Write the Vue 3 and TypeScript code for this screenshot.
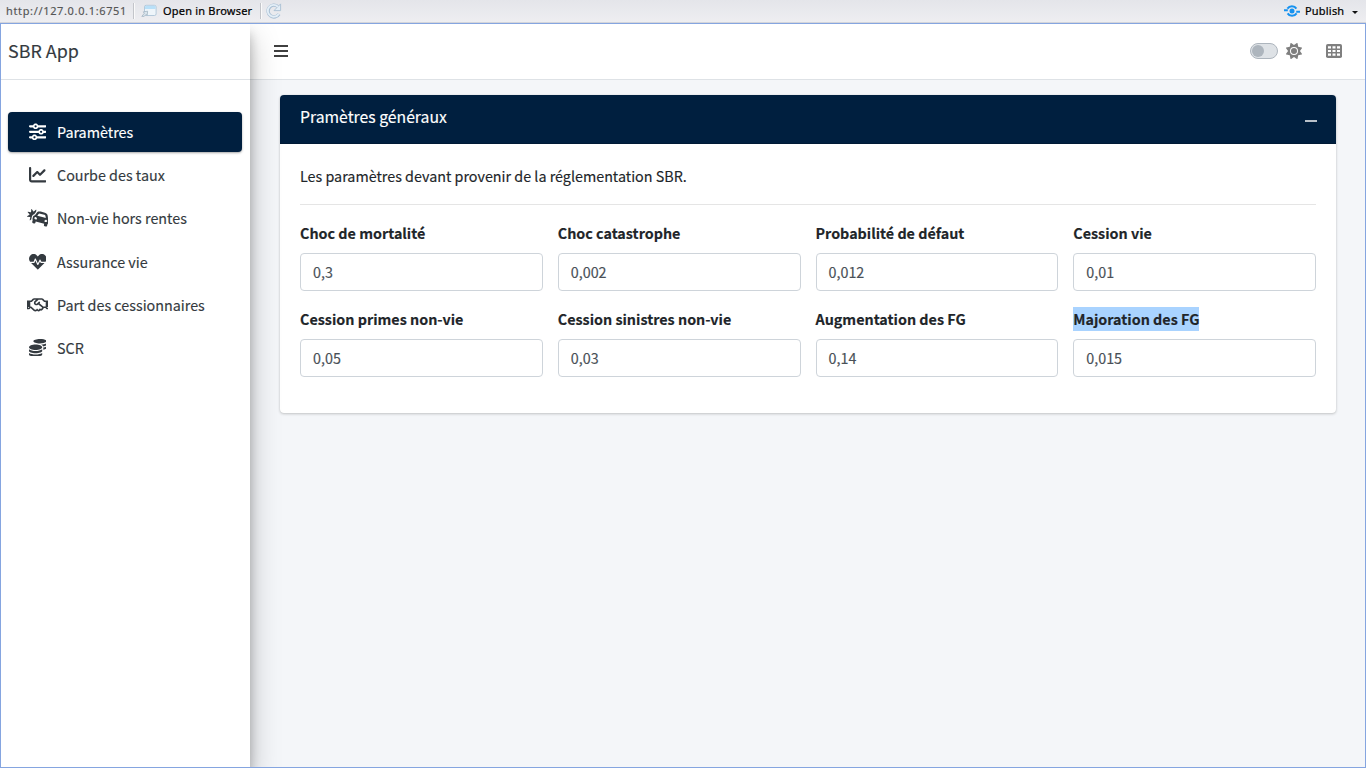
<script setup lang="ts">
interface NavItem {
  label: string
  box: string
  path: string
}

const nav: NavItem[] = [
  {
    label: 'Paramètres',
    box: '0 0 512 512',
    path: 'M0 416c0 17.7 14.3 32 32 32l54.7 0c12.3 28.3 40.5 48 73.3 48s61-19.7 73.3-48L480 448c17.7 0 32-14.3 32-32s-14.3-32-32-32l-246.7 0c-12.3-28.3-40.5-48-73.3-48s-61 19.7-73.3 48L32 384c-17.7 0-32 14.3-32 32zm128 0a32 32 0 1 1 64 0 32 32 0 1 1 -64 0zM320 256a32 32 0 1 1 64 0 32 32 0 1 1 -64 0zm32-80c-32.8 0-61 19.7-73.3 48L32 224c-17.7 0-32 14.3-32 32s14.3 32 32 32l246.7 0c12.3 28.3 40.5 48 73.3 48s61-19.7 73.3-48l54.7 0c17.7 0 32-14.3 32-32s-14.3-32-32-32l-54.7 0c-12.3-28.3-40.5-48-73.3-48zM192 128a32 32 0 1 1 0-64 32 32 0 1 1 0 64zm73.3-64C253 35.7 224.8 16 192 16s-61 19.7-73.3 48L32 64C14.3 64 0 78.3 0 96s14.3 32 32 32l86.7 0c12.3 28.3 40.5 48 73.3 48s61-19.7 73.3-48L480 128c17.7 0 32-14.3 32-32s-14.3-32-32-32L265.3 64z',
  },
  {
    label: 'Courbe des taux',
    box: '0 0 512 512',
    path: 'M64 64c0-17.7-14.3-32-32-32S0 46.3 0 64V400c0 44.2 35.8 80 80 80H480c17.7 0 32-14.3 32-32s-14.3-32-32-32H80c-8.8 0-16-7.2-16-16V64zm406.6 86.6c12.5-12.5 12.5-32.8 0-45.3s-32.8-12.5-45.3 0L320 210.7l-57.4-57.4c-12.5-12.5-32.8-12.5-45.3 0l-112 112c-12.5 12.5-12.5 32.8 0 45.3s32.8 12.5 45.3 0L240 221.3l57.4 57.4c12.5 12.5 32.8 12.5 45.3 0l128-128z',
  },
  {
    label: 'Non-vie hors rentes',
    box: '0 0 640 512',
    path: 'M143.25 220.81l-12.42 46.37c-3.01 11.25-3.63 22.89-2.41 34.39l-35.2 28.98c-6.57 5.41-16.31-.43-14.62-8.77l15.44-76.68c1.06-5.26-2.66-10.28-8-10.79l-77.86-7.55c-8.47-.82-11.23-11.83-4.14-16.54l65.15-43.3c4.46-2.97 5.38-9.15 1.98-13.29L21.46 93.22c-5.41-6.57.43-16.3 8.78-14.62l76.68 15.44c5.26 1.06 10.28-2.66 10.8-8l7.55-77.86c.82-8.48 11.83-11.23 16.55-4.14l43.3 65.14c2.97 4.46 9.15 5.38 13.29 1.98l60.4-49.71c6.57-5.41 16.3.43 14.62 8.77L262.1 86.38c-2.71 3.05-5.43 6.09-7.91 9.4l-32.15 42.97-10.71 14.32c-32.73 8.76-59.18 34.53-68.08 67.74zm494.57 132.51l-12.42 46.36c-3.13 11.68-9.38 21.61-17.55 29.36a66.876 66.876 0 0 1-8.76 7l-13.99 52.23c-1.14 4.27-3.1 8.1-5.65 11.38-7.67 9.84-20.74 14.68-33.54 11.25L515 502.62c-17.07-4.57-27.2-22.12-22.63-39.19l8.28-30.91-247.28-66.26-8.28 30.91c-4.57 17.07-22.12 27.2-39.19 22.63l-30.91-8.28c-12.8-3.43-21.7-14.16-23.42-26.51-.57-4.12-.35-8.42.79-12.68l13.99-52.23a66.62 66.62 0 0 1-4.09-10.45c-3.2-10.79-3.65-22.52-.52-34.2l12.42-46.37c5.31-19.8 19.36-34.83 36.89-42.21a64.336 64.336 0 0 1 18.49-4.72l18.13-24.23 32.15-42.97c3.45-4.61 7.19-8.9 11.2-12.84 8-7.89 17.03-14.44 26.74-19.51 4.86-2.54 9.89-4.71 15.05-6.49 10.33-3.58 21.19-5.63 32.24-6.04 11.05-.41 22.31.82 33.43 3.8l122.68 32.87c11.12 2.98 21.48 7.54 30.85 13.43a111.11 111.11 0 0 1 34.69 34.5c8.82 13.88 14.64 29.84 16.68 46.99l6.36 53.29 3.59 30.05a64.49 64.49 0 0 1 22.74 29.93c4.39 11.88 5.29 25.19 1.75 38.39zM255.58 234.34c-18.55-4.97-34.21 4.04-39.17 22.53-4.96 18.49 4.11 34.12 22.65 39.09 18.55 4.97 45.54 15.51 50.49-2.98 4.96-18.49-15.43-53.67-33.97-58.64zm290.61 28.17l-6.36-53.29c-.58-4.87-1.89-9.53-3.82-13.86-5.8-12.99-17.2-23.01-31.42-26.82l-122.68-32.87a48.008 48.008 0 0 0-50.86 17.61l-32.15 42.97 172 46.08 75.29 20.18zm18.49 54.65c-18.55-4.97-53.8 15.31-58.75 33.79-4.95 18.49 23.69 22.86 42.24 27.83 18.55 4.97 34.21-4.04 39.17-22.53 4.95-18.48-4.11-34.12-22.66-39.09z',
  },
  {
    label: 'Assurance vie',
    box: '0 0 512 512',
    path: 'M320.2 243.8l-49.7 99.4c-6 12.1-23.4 11.7-28.9-.6l-56.9-126.3-30 71.7H60.6l182.5 186.5c7.1 7.3 18.6 7.3 25.7 0L451.4 288H342.3l-22.1-44.2zM473.7 73.9l-2.4-2.5c-51.5-52.6-135.8-52.6-187.4 0L256 100l-27.9-28.5c-51.5-52.7-135.9-52.7-187.4 0l-2.4 2.4C-10.4 123.7-12.5 203 31 256h102.4l35.9-86.2c5.4-12.9 23.6-13.1 29.3-.4l58.3 129.3 49-97.9c5.9-11.8 22.7-11.8 28.6 0l27.6 55.2H481c43.5-53 41.4-132.3-7.3-182.1z',
  },
  {
    label: 'Part des cessionnaires',
    box: '0 0 640 512',
    path: 'M519.2 127.9l-47.6-47.6A56.252 56.252 0 0 0 432 64H205.2c-14.8 0-29.1 5.9-39.6 16.3L118 127.9H0v255.7h64c17.6 0 31.8-14.2 31.9-31.7h9.1l84.6 76.4c30.9 25.1 73.8 25.7 105.6 3.8 12.5 10.8 26 15.9 41.1 15.9 18.2 0 35.3-7.4 48.8-24 22.1 8.7 48.2 2.6 64-16.8l26.2-32.3c5.6-6.9 9.1-14.8 10.9-23h57.9c.1 17.5 14.4 31.7 31.9 31.7h64V127.9H519.2zM48 351.6c-8.8 0-16-7.2-16-16s7.2-16 16-16 16 7.2 16 16c0 8.9-7.2 16-16 16zm390-6.9l-26.1 32.2c-2.8 3.4-7.8 4-11.3 1.2l-23.9-19.4-30 36.5c-6 7.3-15 4.8-18 2.4l-36.8-31.5-15.6 19.2c-13.9 17.1-39.2 19.7-55.3 6.6l-97.3-88H96V175.8h41.9l61.7-61.6c2-.8 3.7-1.5 5.7-2.3H262l-38.7 35.5c-29.4 26.9-31.1 72.3-4.4 101.3 14.8 16.2 61.2 41.2 101.5 4.4l8.2-7.5 108.2 87.8c3.4 2.8 3.9 7.9 1.2 11.3zm106-40.8h-69.2c-2.3-2.8-4.9-5.4-7.7-7.7l-102.7-83.4 12.5-11.4c6.5-6 7-16.1 1-22.6L367 167.1c-6-6.5-16.1-6.9-22.6-1l-55.2 50.6c-9.5 8.7-25.7 9.4-34.6 0-9.3-9.9-8.5-25.1 1.2-33.9l65.6-60.1c7.4-6.8 17-10.5 27-10.5l83.7-.2c2.1 0 4.1.8 5.5 2.3l61.7 61.6H544v128zm48 47.7c-8.8 0-16-7.2-16-16s7.2-16 16-16 16 7.2 16 16c0 8.9-7.2 16-16 16z',
  },
  {
    label: 'SCR',
    box: '0 0 512 512',
    path: 'M0 405.3V448c0 35.3 86 64 192 64s192-28.7 192-64v-42.7C342.7 434.4 267.2 448 192 448S41.3 434.4 0 405.3zM320 128c106 0 192-28.7 192-64S426 0 320 0 128 28.7 128 64s86 64 192 64zM0 300.4V352c0 35.3 86 64 192 64s192-28.7 192-64v-51.6c-41.3 34-116.9 51.6-192 51.6S41.3 334.4 0 300.4zm416 11c57.3-11.1 96-31.7 96-55.4v-42.7c-23.2 16.4-57.3 27.6-96 34.5v63.6zM192 160C86 160 0 195.8 0 240s86 80 192 80 192-35.8 192-80-86-80-192-80zm219.3 56.3c60-10.8 100.7-32 100.7-56.3v-42.7c-35.5 25.1-96.5 38.6-160.7 41.8 29.5 14.3 51.2 33.5 60 57.2z',
  },
]

const fields: { label: string; value: string; selected?: boolean }[] = [
  { label: 'Choc de mortalité', value: '0,3' },
  { label: 'Choc catastrophe', value: '0,002' },
  { label: 'Probabilité de défaut', value: '0,012' },
  { label: 'Cession vie', value: '0,01' },
  { label: 'Cession primes non-vie', value: '0,05' },
  { label: 'Cession sinistres non-vie', value: '0,03' },
  { label: 'Augmentation des FG', value: '0,14' },
  { label: 'Majoration des FG', value: '0,015', selected: true },
]
</script>

<template>
  <div class="window">
    <div class="toolbar">
      <span class="url">http://127.0.0.1:6751</span>
      <i class="sep"></i>
      <svg class="open-icon" width="16" height="14" viewBox="0 0 16 14">
        <rect x="3.5" y="1.3" width="11.6" height="10.2" rx="1.6" fill="#eef5fa" stroke="#b4c9da" />
        <path d="M4 3Q4 1.8 5.3 1.8h8Q14.6 1.8 14.6 3V5H4z" fill="#b9e0f8" />
        <path d="M.8 12.4L3.4 9.2 2.2 7.9 6.6 7.2 6.2 11.4 5 10.4 3.2 12.4z" fill="#dbe6ee" stroke="#a3b5c3" stroke-width=".8" />
      </svg>
      <span class="open">Open in Browser</span>
      <i class="sep"></i>
      <svg class="reload" width="16" height="16" viewBox="0 0 16 16" fill="none">
        <path d="M13 11.2A5.9 5.9 0 1 1 11.8 3.5" stroke="#a9bfd3" stroke-width="3.4" />
        <path d="M14.6 .9V7.6H8z" fill="#e3eef7" stroke="#a9bfd3" stroke-width=".9" />
        <path d="M12.7 10.9A5.9 5.9 0 1 1 12 3.8" stroke="#e3eef7" stroke-width="1.9" />
      </svg>
      <div class="publish">
        <svg width="16" height="12" viewBox="0 0 16 12" fill="none" stroke="#1692f0">
          <circle cx="8" cy="6" r="2.5" fill="#1692f0" stroke="none" />
          <path d="M3.4 3.6C5.6.4 10.4.4 12.4 3.6M12.6 8.4C10.4 11.6 5.6 11.6 3.6 8.4" stroke-width="2" />
          <path d="M0 5.3h3.8M12.2 6.7H16" stroke-width="1.9" />
        </svg>
        <span>Publish</span>
        <i class="caret"></i>
      </div>
    </div>

    <div class="frame">
      <aside class="sidebar">
        <div class="brand">SBR App</div>
        <nav>
          <a v-for="(item, i) in nav" :key="item.label" :class="['nav-link', { active: i === 0 }]">
            <span class="nav-icon">
              <svg :viewBox="item.box" fill="currentColor"><path :d="item.path" /></svg>
            </span>
            <span>{{ item.label }}</span>
          </a>
        </nav>
      </aside>

      <div class="main">
        <header class="navbar">
          <svg class="bars" width="14" height="12" viewBox="0 0 14 12">
            <path d="M0 0h14v2H0zM0 5h14v2H0zM0 10h14v2H0z" fill="#404040" />
          </svg>
          <div class="tools">
            <span class="switch"><i></i></span>
            <svg class="sun" width="16" height="16" viewBox="0 0 512 512" fill="#7f7f7f">
              <path d="M361.5 1.2c5 2.1 8.6 6.6 9.6 11.9L391 121l107.9 19.8c5.3 1 9.8 4.6 11.9 9.6s1.5 10.7-1.6 15.2L446.9 256l62.3 90.3c3.1 4.5 3.7 10.2 1.6 15.2s-6.6 8.6-11.9 9.6L391 391 371.1 498.9c-1 5.3-4.6 9.8-9.6 11.9s-10.7 1.5-15.2-1.6L256 446.9l-90.3 62.3c-4.5 3.1-10.2 3.7-15.2 1.6s-8.6-6.6-9.6-11.9L121 391 13.1 371.1c-5.3-1-9.8-4.6-11.9-9.6s-1.5-10.7 1.6-15.2L65.1 256 2.8 165.7c-3.1-4.5-3.7-10.2-1.6-15.2s6.6-8.6 11.9-9.6L121 121 140.9 13.1c1-5.3 4.6-9.8 9.6-11.9s10.7-1.5 15.2 1.6L256 65.1 346.3 2.8c4.5-3.1 10.2-3.7 15.2-1.6zM160 256a96 96 0 1 1 192 0 96 96 0 1 1 -192 0zm224 0a128 128 0 1 0 -256 0 128 128 0 1 0 256 0z" />
            </svg>
            <svg class="cells" width="16" height="14" viewBox="0 0 16 14">
              <rect width="16" height="14" rx="1.8" fill="#7f7f7f" />
              <path d="M2 2.2h3v2.2H2zM6.5 2.2h3v2.2h-3zM11 2.2h3v2.2h-3zM2 5.9h3v2.2H2zM6.5 5.9h3v2.2h-3zM11 5.9h3v2.2h-3zM2 9.6h3v2.2H2zM6.5 9.6h3v2.2h-3zM11 9.6h3v2.2h-3z" fill="#fff" />
            </svg>
          </div>
        </header>

        <section class="card">
          <div class="card-header">
            <h3>Pramètres généraux</h3>
            <i class="minus"></i>
          </div>
          <div class="card-body">
            <p>Les paramètres devant provenir de la réglementation SBR.</p>
            <hr />
            <div class="grid">
              <div v-for="f in fields" :key="f.label" class="field">
                <label><span :class="{ selected: f.selected }">{{ f.label }}</span></label>
                <div class="input">{{ f.value }}</div>
              </div>
            </div>
          </div>
        </section>
      </div>
    </div>
  </div>
</template>

<style>
body {
  margin: 0;
  overflow: hidden;
}
</style>

<style scoped>
* {
  box-sizing: border-box;
}
.window {
  width: 1366px;
  height: 768px;
  display: flex;
  flex-direction: column;
  font-family: 'Noto Sans CJK SC', 'Noto Sans', sans-serif;
  font-size: 14.33px;
  color: #212529;
  white-space: nowrap;
  -webkit-text-stroke: 0.15px currentColor;
}
svg {
  display: block;
  flex: none;
}
.toolbar {
  height: 23px;
  flex: none;
  display: flex;
  align-items: center;
  padding: 0 6px;
  background: linear-gradient(#e4e5ea, #eeeef1);
  border-bottom: 1px solid #d4d5da;
  font: 11px/22px 'Noto Sans', sans-serif;
  color: #000;
}
.url {
  width: 127px;
  color: #555;
  letter-spacing: 0.65px;
}
.sep {
  width: 2px;
  height: 16px;
  background: #c3c5ca;
  border-right: 1px solid #fafafa;
}
.open-icon {
  margin: 0 5px 0 6px;
}
.open {
  width: 98px;
  padding-left: 1px;
  letter-spacing: 0.2px;
  -webkit-text-stroke: 0.22px currentColor;
}
.reload {
  margin-left: 4px;
}
.publish {
  margin-left: auto;
  display: flex;
  align-items: center;
}
.publish span {
  width: 47px;
  margin-left: 5px;
  letter-spacing: 0.2px;
  -webkit-text-stroke: 0.22px currentColor;
}
.caret {
  border: 3px solid transparent;
  border-top: 3px solid #111;
  border-bottom: 0;
  margin: 2px 2px 0 0;
}
.frame {
  flex: 1;
  display: flex;
  border: 1px solid #85a5e0;
  overflow: hidden;
  background: #f4f6f9;
}
.sidebar {
  width: 249px;
  flex: none;
  position: relative;
  z-index: 2;
  background: #fff;
  box-shadow: 0 14px 28px rgba(0, 0, 0, 0.25), 0 10px 10px rgba(0, 0, 0, 0.22);
}
.brand {
  height: 56px;
  border-bottom: 1px solid #dee2e6;
  padding-left: 7px;
  font-size: 17.9px;
  line-height: 52px;
  color: #343a40;
}
nav {
  padding: 32px 8px 0 7px;
  display: flex;
  flex-direction: column;
  gap: 3.2px;
}
.nav-link {
  height: 40px;
  display: flex;
  align-items: center;
  padding-left: 16px;
  border-radius: 4px;
  color: #343a40;
  line-height: 40px;
}
.nav-link.active {
  background: #001f3f;
  color: #fff;
  box-shadow: 0 1px 3px rgba(0, 0, 0, 0.12), 0 1px 2px rgba(0, 0, 0, 0.24);
}
.nav-icon {
  width: 27px;
  display: flex;
  justify-content: center;
  margin-right: 6px;
  padding-bottom: 0.5px;
}
.nav-icon svg {
  height: 17.6px;
}
.main {
  flex: 1;
  min-width: 0;
}
.navbar {
  height: 56px;
  background: #fff;
  border-bottom: 1px solid #dee2e6;
  display: flex;
  align-items: center;
  justify-content: space-between;
  padding: 0 23px 1px 24px;
}
.tools {
  display: flex;
  align-items: center;
}
.switch {
  width: 28px;
  height: 16px;
  border: 1px solid #adb5bd;
  border-radius: 8px;
  background: #dee2e6;
  padding: 1px;
}
.switch i {
  display: block;
  width: 12px;
  height: 12px;
  border-radius: 50%;
  background: #adb5bd;
}
.sun {
  margin: 0 24px 0 8px;
}
.card {
  margin: 15px 29px 0 30px;
  height: 318px;
  border-radius: 4px;
  background: #fff;
  box-shadow: 0 0 1px rgba(0, 0, 0, 0.125), 0 1px 3px rgba(0, 0, 0, 0.2);
}
.card-header {
  height: 49px;
  display: flex;
  justify-content: space-between;
  padding: 0 19px 0 20px;
  background: #001f3f;
  border-bottom: 1px solid #001a35;
  border-radius: 4px 4px 0 0;
  color: #fff;
}
h3 {
  margin: 0;
  font-size: 15.76px;
  font-weight: 400;
  line-height: 44px;
}
.minus {
  width: 12px;
  height: 2px;
  margin-top: 25px;
  background: #b8c0c9;
}
.card-body {
  padding: 20px;
}
p {
  margin: 0;
  line-height: 24px;
}
hr {
  margin: 16px 0;
  border: 0;
  border-top: 1px solid #e5e5e5;
}
.grid {
  display: grid;
  grid-template-columns: repeat(4, 1fr);
  column-gap: 15px;
  row-gap: 16px;
}
.field {
  height: 70px;
}
label {
  display: block;
  height: 32px;
  line-height: 24px;
  font-weight: 700;
}
label span {
  display: inline-block;
  height: 24px;
}
.selected {
  background: #a9d3ff;
}
.input {
  height: 38px;
  border: 1px solid #ced4da;
  border-radius: 4px;
  padding-left: 12px;
  line-height: 35px;
  color: #495057;
}
</style>
